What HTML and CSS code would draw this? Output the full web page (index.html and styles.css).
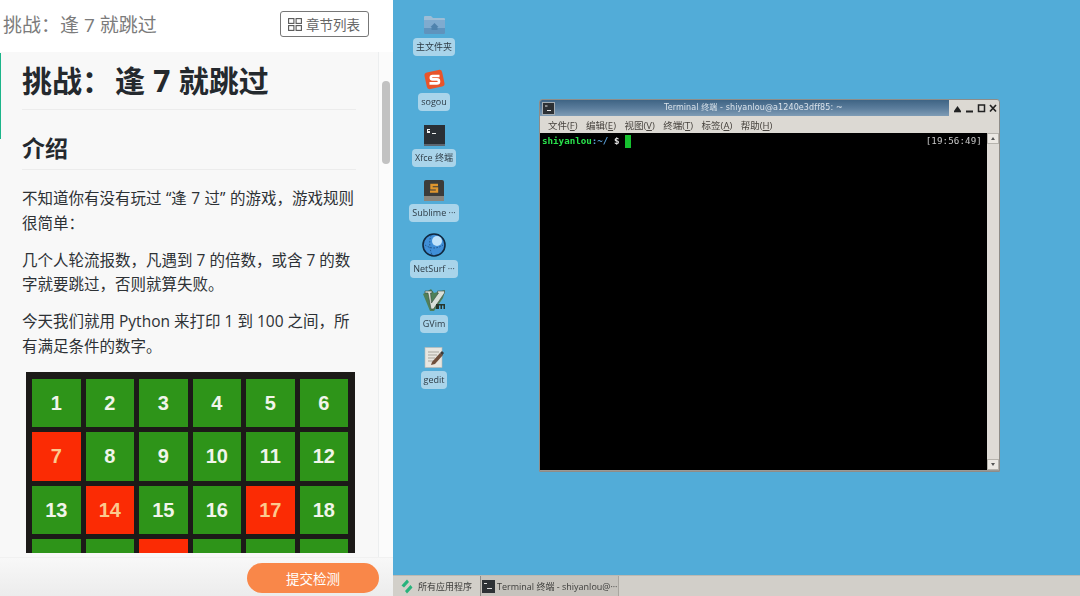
FILE: index.html
```html
<!DOCTYPE html>
<html lang="zh-CN">
<head>
<meta charset="utf-8">
<title>挑战：逢 7 就跳过</title>
<link rel="stylesheet" href="styles.css">
</head>
<body>
<div class="page">
  <section class="lesson">
    <header class="lesson-head">
      <span class="lesson-title">挑战：逢 7 就跳过</span>
      <button class="chapters">
        <svg class="chapters-icon" width="14" height="13" viewBox="0 0 14 13"><g fill="none" stroke="#555" stroke-width="1.1"><rect x="0.6" y="0.6" width="5.3" height="4.8"/><rect x="8.1" y="0.6" width="5.3" height="4.8"/><rect x="0.6" y="7.6" width="5.3" height="4.8"/><rect x="8.1" y="7.6" width="5.3" height="4.8"/></g></svg>
        章节列表
      </button>
    </header>
    <div class="lesson-main">
      <i class="accent"></i>
      <article class="doc">
        <h1>挑战<span class="colon">：</span>逢 7 就跳过</h1>
        <h2>介绍</h2>
        <p class="lead">不知道你有没有玩过 “逢 7 过” 的游戏，游戏规则很简单：</p>
        <p>几个人轮流报数，凡遇到 7 的倍数，或含 7 的数字就要跳过，否则就算失败。</p>
        <p>今天我们就用 Python 来打印 1 到 100 之间，所有满足条件的数字。</p>
        <div class="board">
          <b>1</b><b>2</b><b>3</b><b>4</b><b>5</b><b>6</b>
          <b class="hit">7</b><b>8</b><b>9</b><b>10</b><b>11</b><b>12</b>
          <b>13</b><b class="hit">14</b><b>15</b><b>16</b><b class="hit">17</b><b>18</b>
          <b></b><b></b><b class="hit"></b><b></b><b></b><b></b>
        </div>
      </article>
      <div class="doc-scroll"><i class="doc-thumb"></i></div>
    </div>
    <footer class="lesson-foot"><button class="submit">提交检测</button></footer>
  </section>

  <section class="desktop">
    <div class="canvas">
      <div class="launcher">
        <div class="launch">
          <svg width="23" height="20" viewBox="0 0 23 20"><path d="M1 2q0-1 1-1h6l2 2h11q1 0 1 1v3H1z" fill="#9dbdd6"/><path d="M1 5h21v13q0 1-1 1H2q-1 0-1-1z" fill="#7fabcf"/><path d="M1 13h21v5q0 1-1 1H2q-1 0-1-1z" fill="#5f93bd"/><path d="M11.500 8l4 4h-1v3h-6v-3h-1z" fill="#4f83ad"/></svg>
          <span>主文件夹</span>
        </div>
        <div class="launch">
          <svg width="23" height="21" viewBox="0 0 23 21"><rect x="2.500" y="2" width="18" height="17" rx="3" fill="#e8542a" transform="rotate(-12 11.500 10.500)"/><path d="M16.500 7H9.500q-1.700 0-1.700 1.700t1.700 1.700h4.500q2 0 2 2t-2 2H6.500" fill="none" stroke="#fff" stroke-width="2.600"/></svg>
          <span>sogou</span>
        </div>
        <div class="launch">
          <svg width="21" height="21" viewBox="0 0 21 21"><rect width="21" height="21" fill="#2a3036"/><rect y="19" width="21" height="2" fill="#5c6670"/><path d="M3 4h3v1H4v1h2v2H3M8 8h4v1H8z" fill="#f2f2f2"/></svg>
          <span>Xfce 终端</span>
        </div>
        <div class="launch">
          <svg width="22" height="21" viewBox="0 0 22 21"><rect x="1" y="0" width="20" height="21" rx="2" fill="#3c3c3a"/><rect x="1" y="16" width="20" height="5" fill="#8a857c"/><path d="M15 5H8.500v3.400H14v3.200H7" fill="none" stroke="#e0962e" stroke-width="2.400"/></svg>
          <span>Sublime ···</span>
        </div>
        <div class="launch">
          <svg width="24" height="24" viewBox="0 0 24 24"><circle cx="12" cy="12" r="11" fill="#3f8fd8" stroke="#10283e" stroke-width="1.600"/><circle cx="15" cy="8" r="5" fill="#bfe3fb"/><path d="M3 12q9 6 18 0M9 2q-3 10 1 20" fill="none" stroke="#143c66" stroke-width=".7" stroke-dasharray="1.500 1.500"/></svg>
          <span>NetSurf ···</span>
        </div>
        <div class="launch">
          <svg width="25" height="24" viewBox="0 0 25 24"><path d="M1 6l8-5 3 4 11-3-2 8-9 13H8z" fill="#4f7f58"/><path d="M3 3h7v2H8.500l1 10 7-10h-1V3h7v2l-11 16H9L6 5H3z" fill="#d8dfd8" stroke="#3a4a3e" stroke-width=".6"/><path d="M14 16h9v5h-1.500v-3.500H20V21h-1.500v-3.500H17V21h-3z" fill="#26352b"/></svg>
          <span>GVim</span>
        </div>
        <div class="launch">
          <svg width="20" height="21" viewBox="0 0 20 21"><rect x="1" y="0.500" width="17" height="20" fill="#e8e6e0" stroke="#bdbab2" stroke-width=".6"/><path d="M4 5h11M4 8h9M4 11h7M4 14h6" stroke="#a8a59c"/><path d="M8 15l8-9 3 2-8 9-4 1z" fill="#6f4f3c"/><path d="M16 6l2-2 2 2-1.500 2z" fill="#3a3a3a"/></svg>
          <span>gedit</span>
        </div>
      </div>

      <div class="term">
        <div class="term-title">
          <span class="term-app">
            <svg width="13" height="13" viewBox="0 0 13 13"><rect x=".5" y=".5" width="12" height="12" fill="#2c3034" stroke="#a3acb3"/><path d="M3 3.500h2.500v1H3zM5 8h4v1H5z" fill="#e4e4e4"/></svg>
          </span>
          <span class="term-name">Terminal 终端 - shiyanlou@a1240e3dff85: ~</span>
          <span class="term-ctl">
            <svg width="44" height="10" viewBox="0 0 44 10"><path d="M1 8l3.500-5 3.500 5z" fill="#222"/><rect x="1" y="8" width="7" height="1.300" fill="#222"/><rect x="13" y="7.500" width="7" height="2" fill="#222"/><rect x="25.500" y="2" width="6" height="6.500" fill="none" stroke="#222" stroke-width="1.500"/><path d="M37 2l6 6.500M43 2l-6 6.500" stroke="#222" stroke-width="1.700"/></svg>
          </span>
        </div>
        <nav class="term-menu"><span>文件(<u>F</u>)</span><span>编辑(<u>E</u>)</span><span>视图(<u>V</u>)</span><span>终端(<u>T</u>)</span><span>标签(<u>A</u>)</span><span>帮助(<u>H</u>)</span></nav>
        <div class="term-body">
          <div class="term-screen">
            <div class="term-line"><span class="prompt">shiyanlou</span><span class="path">:~/</span><span class="dollar"> $ </span><i class="cursor"></i><span class="clock">[19:56:49]</span></div>
          </div>
          <div class="term-scroll"><i class="arrow-up"></i><i class="track"></i><i class="arrow-down"></i></div>
        </div>
      </div>
    </div>

    <div class="taskbar">
      <span class="start">
        <svg width="13" height="15" viewBox="0 0 13 15"><path d="M7 0.500L1.500 6.500 4 8.500 9 3zM10.500 6L5 12l2 2.500L12.500 8.500z" fill="#27b37c"/></svg>
        所有应用程序
      </span>
      <span class="task">
        <svg width="13" height="13" viewBox="0 0 13 13"><rect width="13" height="13" fill="#2d3135"/><path d="M2 3h3v1H2zM5 8h5v1H5z" fill="#ddd"/></svg>
        Terminal 终端 - shiyanlou@···
      </span>
    </div>
  </section>
</div>
</body>
</html>
```
FILE: styles.css
```css
* { box-sizing: border-box; }
html, body { margin: 0; height: 100%; overflow: hidden; }
body { font-family: "Open Sans", "Noto Sans CJK SC", sans-serif; color: #24292e; }
.page { display: flex; width: 1080px; height: 596px; }

/* left lesson panel */
.lesson { width: 393px; flex: none; display: flex; flex-direction: column; background: #fff; }
.lesson-head { height: 52px; flex: none; display: flex; align-items: center; justify-content: space-between; padding: 0 24px 4px 3px; background: #fff; }
.lesson-title { font-size: 19px; color: #7b7b7b; }
.chapters { display: flex; align-items: center; gap: 4px; width: 89px; height: 26px; padding: 0 0 0 7px; border: 1px solid #777; border-radius: 3px; background: #fff; font-family: inherit; font-size: 13.500px; color: #666; white-space: nowrap; }
.chapters-icon { flex: none; }
.lesson-main { position: relative; flex: 1; min-height: 0; display: flex; background: #f8f8f8; overflow: hidden; }
.accent { position: absolute; left: 0; top: 1px; width: 1px; height: 86px; background: #1cb58a; }
.doc { width: 379px; flex: none; padding: 0 22px; border-right: 1px solid #eceeef; overflow: hidden; }
.doc h1 { margin: 0 0 17px; height: 58px; padding-top: 7px; font-size: 30px; line-height: 44px; font-weight: 700; word-spacing: .5px; color: #24292e; border-bottom: 1px solid #ececec; }
.colon { margin-right: 3px; }
.doc h2 { margin: 0 0 16px; height: 43px; font-size: 23px; line-height: 42px; font-weight: 700; border-bottom: 1px solid #ececec; }
.doc p { margin: 0 0 12.500px; font-size: 15.500px; line-height: 24.500px; color: #2d3135; }
.doc p.lead { word-spacing: .4px; }
.board { width: 329px; height: 181px; margin: 13.500px 0 0 4px; padding: 7px 6px 0; display: grid; grid-template-columns: repeat(6, 48.500px); grid-auto-rows: 48.500px; gap: 5px; background: #1c1a18; overflow: hidden; }
.board b { display: flex; align-items: center; justify-content: center; background: #2e9419; color: #f1f5ea; font: 700 20px/1 "Liberation Sans", sans-serif; }
.board b.hit { background: #fb2b04; color: #fbc98e; }
.doc-scroll { flex: 1; background: #fbfbfb; padding: 29px 0 0 2.500px; }
.doc-thumb { display: block; width: 8px; height: 83px; border-radius: 4px; background: #c2c2c2; }
.lesson-foot { height: 39px; flex: none; display: flex; justify-content: flex-end; align-items: flex-start; padding: 5px 14px 0 0; background: linear-gradient(#f8f8f8, #ececec); border-top: 1px solid #f1f1f1; }
.submit { width: 132px; height: 30px; border: 0; border-radius: 15px; background: #f98749; color: #fff; font-family: inherit; font-size: 13.500px; padding: 0; }

/* right desktop */
.desktop { flex: 1; display: flex; flex-direction: column; background: #52acd8; filter: blur(.3px); }
.canvas { position: relative; flex: 1; }
.launcher { position: absolute; left: 0; top: 0; width: 82px; display: flex; flex-direction: column; }
.launch { height: 55.500px; display: flex; flex-direction: column; align-items: center; justify-content: flex-end; gap: 3px; }
.launch svg { flex: none; }
.launch span { padding: 2px 3px; height: 18px; font-size: 9px; line-height: 14px; color: #2d3b45; background: #a9d4ea; border-radius: 4px; white-space: nowrap; }

.term { position: absolute; left: 146px; top: 99px; width: 461px; height: 373px; display: flex; flex-direction: column; background: #dcd9d3; border: 1px solid #8e8c88; border-radius: 3px 3px 0 0; overflow: hidden; }
.term-title { height: 16px; flex: none; display: flex; align-items: center; }
.term-app { width: 409px; height: 100%; flex: none; display: flex; align-items: center; padding-left: 2px; background: linear-gradient(#3f6484, #5a7c9b 50%, #7f9cb5); }
.term-name { position: absolute; left: 124px; width: 290px; font: 8px/16px "DejaVu Sans", "Noto Sans CJK SC", sans-serif; color: #d9e2ea; letter-spacing: .1px; }
.term-ctl { flex: 1; display: flex; align-items: center; padding-left: 4px; }
.term-menu { height: 17px; flex: none; display: flex; gap: 8.500px; align-items: center; padding-left: 8px; font-size: 9.500px; color: #47433e; background: #dcd9d3; white-space: nowrap; }
.term-body { flex: 1; display: flex; min-height: 0; border-bottom: 1px solid #9a9894; }
.term-screen { flex: 1; background: #000; }
.term-line { display: flex; align-items: center; height: 14px; margin-top: 1px; padding-left: 2px; font: 700 9.200px/14px "DejaVu Sans Mono", monospace; color: #d6d6d6; white-space: pre; }
.prompt { color: #29e14b; }
.path { color: #5a9fd8; }
.dollar { color: #e2e2e2; }
.cursor { display: inline-block; width: 6px; height: 13px; background: #16c12f; }
.clock { margin-left: auto; padding-right: 5px; font-weight: 400; letter-spacing: .1px; color: #c8c8c8; }
.term-scroll { width: 12px; flex: none; display: flex; flex-direction: column; background: #d2cfc9; }
.arrow-up, .arrow-down { display: block; height: 11px; background: #ece9e4; border: 1px solid #b6b3ad; position: relative; }
.arrow-up::after, .arrow-down::after { content: ""; position: absolute; left: 2.500px; top: 3px; border-left: 2.500px solid transparent; border-right: 2.500px solid transparent; }
.arrow-up::after { border-bottom: 3px solid #555; }
.arrow-down::after { border-top: 3px solid #555; }
.track { flex: 1; display: block; background: #dedbd6; }

.taskbar { height: 21px; flex: none; display: flex; align-items: stretch; background: #d2cfc9; border-top: 1px solid #bcb9b2; color: #3c3c3a; }
.start { width: 87px; display: flex; align-items: center; gap: 5px; padding-left: 7px; white-space: nowrap; font-size: 9px; }
.start svg, .task svg { flex: none; }
.task { width: 139px; display: flex; align-items: center; gap: 2px; padding-left: 1px; white-space: nowrap; font-size: 9px; background: #c6c3bd; border-left: 1px solid #8e8c88; border-right: 1px solid #a9a6a0; overflow: hidden; }
```
